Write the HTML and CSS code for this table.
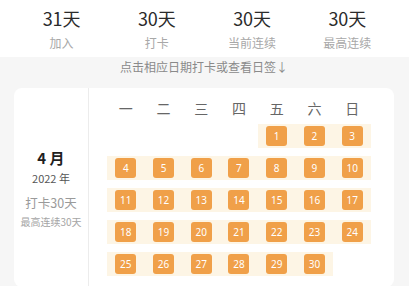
FILE: index.html
```html
<!DOCTYPE html>
<html lang="zh-CN">
<head>
<meta charset="utf-8">
<link rel="stylesheet" href="styles.css">
</head>
<body>
<div class="stats">
  <div class="stat"><div class="num">31天</div><div class="lbl">加入</div></div>
  <div class="stat"><div class="num">30天</div><div class="lbl">打卡</div></div>
  <div class="stat"><div class="num">30天</div><div class="lbl">当前连续</div></div>
  <div class="stat"><div class="num">30天</div><div class="lbl">最高连续</div></div>
</div>
<div class="page">
  <div class="hint">点击相应日期打卡或查看日签↓</div>
  <div class="card">
    <div class="month">
      <div class="m-title">4 月</div>
      <div class="m-year">2022 年</div>
      <div class="m-days">打卡30天</div>
      <div class="m-best">最高连续30天</div>
    </div>
    <div class="cal">
      <div class="week">
        <span>一</span><span>二</span><span>三</span><span>四</span><span>五</span><span>六</span><span>日</span>
      </div>
      <div class="days">
        <div class="empty"></div><div class="empty"></div><div class="empty"></div><div class="empty"></div>
        <div class="day"><span>1</span></div><div class="day"><span>2</span></div><div class="day"><span>3</span></div>
        <div class="day"><span>4</span></div><div class="day"><span>5</span></div><div class="day"><span>6</span></div><div class="day"><span>7</span></div><div class="day"><span>8</span></div><div class="day"><span>9</span></div><div class="day"><span>10</span></div>
        <div class="day"><span>11</span></div><div class="day"><span>12</span></div><div class="day"><span>13</span></div><div class="day"><span>14</span></div><div class="day"><span>15</span></div><div class="day"><span>16</span></div><div class="day"><span>17</span></div>
        <div class="day"><span>18</span></div><div class="day"><span>19</span></div><div class="day"><span>20</span></div><div class="day"><span>21</span></div><div class="day"><span>22</span></div><div class="day"><span>23</span></div><div class="day"><span>24</span></div>
        <div class="day"><span>25</span></div><div class="day"><span>26</span></div><div class="day"><span>27</span></div><div class="day"><span>28</span></div><div class="day"><span>29</span></div><div class="day"><span>30</span></div>
      </div>
    </div>
  </div>
</div>
</body>
</html>
```
FILE: styles.css
```css
html, body {
  margin: 0;
  padding: 0;
}
body {
  width: 409px;
  height: 286px;
  overflow: hidden;
  font-family: "Noto Sans CJK SC", "Noto Sans", sans-serif;
  background: #f6f6f6;
  color: #333;
}
.stats {
  display: grid;
  grid-template-columns: repeat(4, 1fr);
  padding: 6px 14px 6px;
  background: #fff;
  height: 45px;
}
.stat {
  text-align: center;
}
.num {
  font-size: 18px;
  line-height: 24px;
  color: #2b2b2b;
}
.lbl {
  margin-top: 5px;
  font-size: 12px;
  line-height: 16px;
  color: #a8a8a8;
}
.page {
  padding: 0 15px 0 14px;
}
.hint {
  text-align: center;
  font-size: 12px;
  line-height: 20px;
  color: #8a8a8a;
  margin-bottom: 11px;
}
.card {
  display: flex;
  background: #fff;
  border-radius: 8px;
}
.month {
  width: 74px;
  border-right: 1px solid #ececec;
  padding-top: 60px;
  text-align: center;
}
.m-title {
  font-size: 15px;
  line-height: 20px;
  font-weight: 700;
  color: #1f1f1f;
}
.m-year {
  margin-top: 2px;
  font-size: 11px;
  line-height: 16px;
  color: #555;
}
.m-days {
  margin-top: 8px;
  font-size: 12.5px;
  line-height: 18px;
  color: #9a9a9a;
}
.m-best {
  margin-top: 3px;
  font-size: 10px;
  line-height: 14px;
  color: #a5a5a5;
}
.cal {
  flex: 1;
  padding: 8px 23px 11px 18px;
}
.week {
  display: grid;
  grid-template-columns: repeat(7, 1fr);
  height: 24px;
  line-height: 24px;
  text-align: center;
  font-size: 14px;
  color: #666;
  margin-bottom: 4px;
}
.days {
  display: grid;
  grid-template-columns: repeat(7, 1fr);
  grid-auto-rows: 24px;
  row-gap: 8px;
}
.day {
  background: #fdf5e5;
  display: flex;
  align-items: center;
  justify-content: center;
}
.day span {
  width: 21px;
  height: 20px;
  border-radius: 3px;
  background: #f0a049;
  color: #fff;
  font-family: "Noto Sans", sans-serif;
  font-size: 10px;
  line-height: 20px;
  text-align: center;
}
```
